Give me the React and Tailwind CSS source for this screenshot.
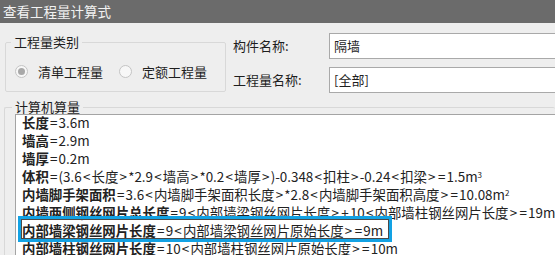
import React from "react";

const font = { fontFamily: '"Noto Sans CJK SC", "Noto Sans", sans-serif' };

const lines = [
  { label: "长度", rest: "=3.6m" },
  { label: "墙高", rest: "=2.9m" },
  { label: "墙厚", rest: "=0.2m" },
  { label: "体积", rest: "=(3.6<长度>*2.9<墙高>*0.2<墙厚>)-0.348<扣柱>-0.24<扣梁>=1.5m", sup: "3" },
  { label: "内墙脚手架面积", rest: "=3.6<内墙脚手架面积长度>*2.8<内墙脚手架面积高度>=10.08m", sup: "2" },
  { label: "内墙两侧钢丝网片总长度", rest: "=9<内部墙梁钢丝网片长度>+10<内部墙柱钢丝网片长度>=19m" },
  { label: "内部墙梁钢丝网片长度", rest: "=9<内部墙梁钢丝网片原始长度>=9m", selected: true },
  { label: "内部墙柱钢丝网片长度", rest: "=10<内部墙柱钢丝网片原始长度>=10m" },
];

// operators are drawn a bit wider in the original font
function Rest({ text }) {
  return text.split(/([=<>+])/).map((part, i) =>
    /^[=<>+]$/.test(part) ? (
      <span key={i} className="mx-[1.2px]">{part}</span>
    ) : (
      <span key={i}>{part}</span>
    )
  );
}

function Radio({ checked, label }) {
  return (
    <div className="flex items-center gap-[10px]">
      <span className="w-[13px] h-[13px] rounded-full border border-[#c4c4c4] bg-[#f7f7f7] flex items-center justify-center">
        {checked && <span className="w-[7px] h-[7px] rounded-full bg-[#a8a8a8]" />}
      </span>
      <span>{label}</span>
    </div>
  );
}

export default function App() {
  return (
    <div className="w-[555px] h-[255px] overflow-hidden bg-[#eeeeee] text-[13px] text-[#1e1e1e]" style={font}>
      <div className="h-[23px] bg-[#6b6b6b] text-[#f2f2f2] text-[13.5px] leading-[23px] pl-[3px]">
        查看工程量计算式
      </div>

      <div className="flex h-[77px]">
        <fieldset className="ml-[5px] mt-[11px] w-[221px] h-[58px] border border-[#d8d8d8] rounded-[2px] px-[9px]">
          <legend className="-ml-[4px] px-[3px] leading-[16px]">工程量类别</legend>
          <div className="flex gap-[16px] mt-[12px]">
            <Radio checked label="清单工程量" />
            <Radio label="定额工程量" />
          </div>
        </fieldset>

        <div className="ml-[7px] mt-[10px] flex-1 flex flex-col gap-[8px]">
          <div className="flex items-center">
            <span className="w-[96px]">构件名称:</span>
            <div className="flex-1 h-[26px] bg-white border border-[#a9a9a9] border-r-0 pl-[4px] leading-[24px]">隔墙</div>
          </div>
          <div className="flex items-center">
            <span className="w-[96px]">工程量名称:</span>
            <div className="flex-1 h-[26px] bg-white border border-[#a9a9a9] border-r-0 pl-[4px] leading-[24px]">[全部]</div>
          </div>
        </div>
      </div>

      <fieldset className="ml-[4px] border border-[#d8d8d8] border-r-0 border-b-0 rounded-[2px] pl-[10px] h-[160px]">
        <legend className="-ml-[3px] px-[3px] leading-[14px]">计算机算量</legend>
        <div className="bg-white border-t border-l border-[#a4a4a4] h-[150px] overflow-hidden">
          <div className="-mt-[2px] text-[13.4px] text-[#222]">
            {lines.map((l, i) => (
              <div key={i} className="relative h-[18px] leading-[18px] pl-[6px] whitespace-nowrap">
                <span className="font-bold">{l.label}</span>
                <Rest text={l.rest} />
                {l.sup && <sup className="text-[8px]">{l.sup}</sup>}
                {l.selected && (
                  <div className="absolute left-[2px] top-[-5px] w-[374px] h-[26px] border-[3px] border-[#12a2e4]">
                    <div className="w-full h-full border border-[#4a4a4a]" />
                  </div>
                )}
              </div>
            ))}
          </div>
        </div>
      </fieldset>
    </div>
  );
}
